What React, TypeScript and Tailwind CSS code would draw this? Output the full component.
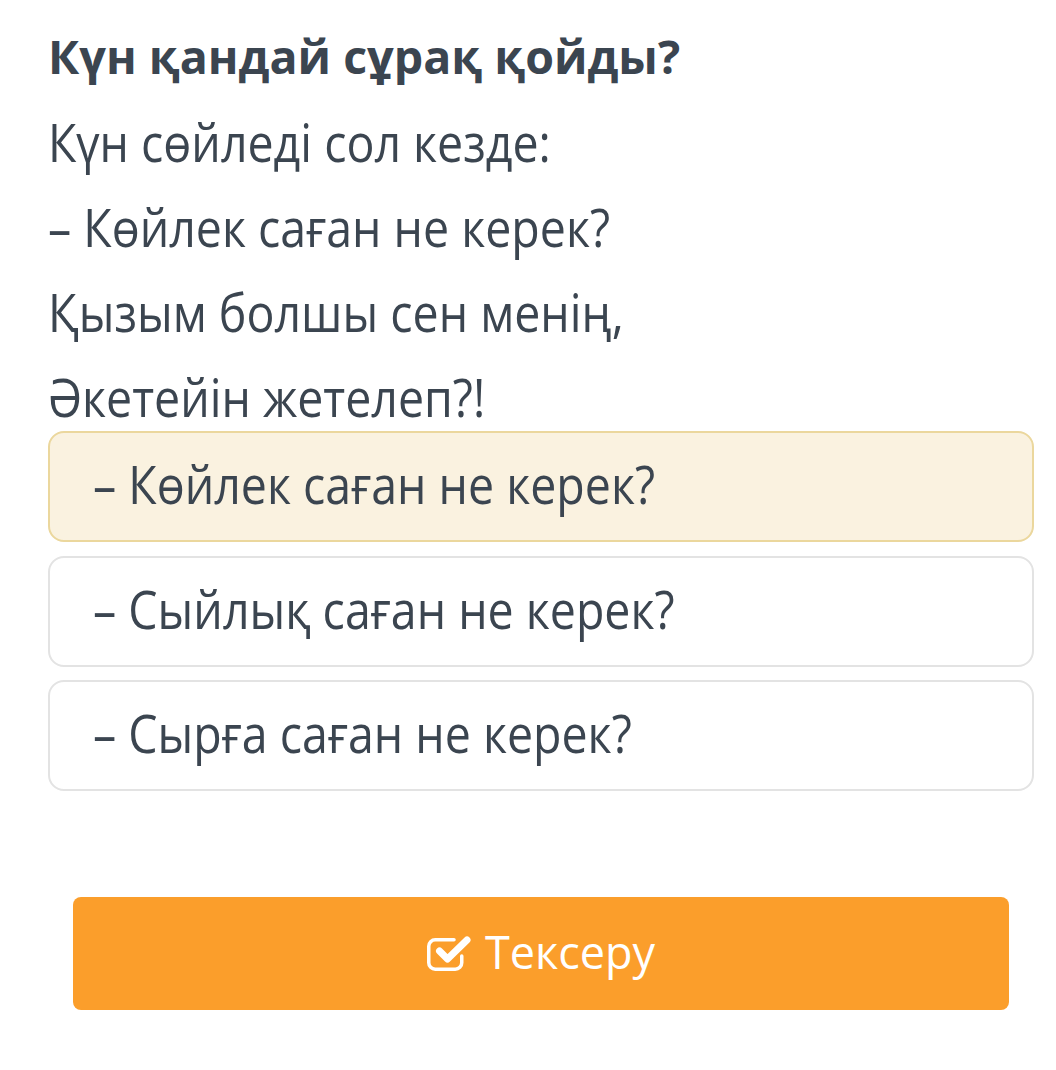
import React from "react";

const font = { fontFamily: '"Open Sans", "Noto Sans", sans-serif' };

export default function App() {
  const lines = [
    "Күн сөйледі сол кезде:",
    "– Көйлек саған не керек?",
    "Қызым болшы сен менің,",
    "Әкетейін жетелеп?!",
  ];
  const options = [
    { t: "– Көйлек саған не керек?", sel: true },
    { t: "– Сыйлық саған не керек?", sel: false },
    { t: "– Сырға саған не керек?", sel: false },
  ];
  return (
    <div className="w-[1056px] h-[1070px] bg-white text-[#3b4550]" style={font}>
      <div className="pl-[48px] pr-[22px] pt-[25px]">
        <h1 className="text-[46.5px] font-bold leading-[62px] text-[#3b4550] whitespace-nowrap">Күн қандай сұрақ қойды?</h1>
        <div className="mt-[15px] flex flex-col">
          {lines.map((l) => (
            <div
              key={l}
              className="text-[46.5px] leading-[85px] h-[85px] whitespace-nowrap scale-y-[1.12] origin-[0_60.5px]"
            >
              {l}
            </div>
          ))}
        </div>
        <div className="-mt-[11px] flex flex-col gap-[13.5px]">
          {options.map((o) => (
            <div
              key={o.t}
              className={
                "h-[111px] rounded-[16px] border-2 flex items-center pl-[43px] " +
                (o.sel ? "bg-[#faf2e0] border-[#ebd79d]" : "bg-white border-[#e3e3e3]")
              }
            >
              <span className="text-[46.5px] leading-none whitespace-nowrap scale-y-[1.12] origin-[0_41.3px]">
                {o.t}
              </span>
            </div>
          ))}
        </div>
        <div className="mt-[106px] ml-[25px] mr-[25px] h-[113px] rounded-[8px] bg-[#fb9e2b] flex items-center justify-center gap-[14px] pb-[5px] text-white">
          <svg width="44" height="36" viewBox="0 0 44 36" fill="none" className="mt-[3px]">
            <path
              d="M27 4.75 H 8.25 A 6.5 6.5 0 0 0 1.75 11.25 V 27.75 A 6.5 6.5 0 0 0 8.25 34.25 H 28.25 A 6.5 6.5 0 0 0 34.75 27.75 V 21"
              stroke="white"
              strokeWidth="3.5"
              strokeLinecap="round"
            />
            <path
              d="M12.5 16 L20.5 24 L40 5"
              stroke="white"
              strokeWidth="7"
              strokeLinecap="round"
              strokeLinejoin="round"
            />
          </svg>
          <span className="text-[45px] leading-none whitespace-nowrap">Тексеру</span>
        </div>
      </div>
    </div>
  );
}
